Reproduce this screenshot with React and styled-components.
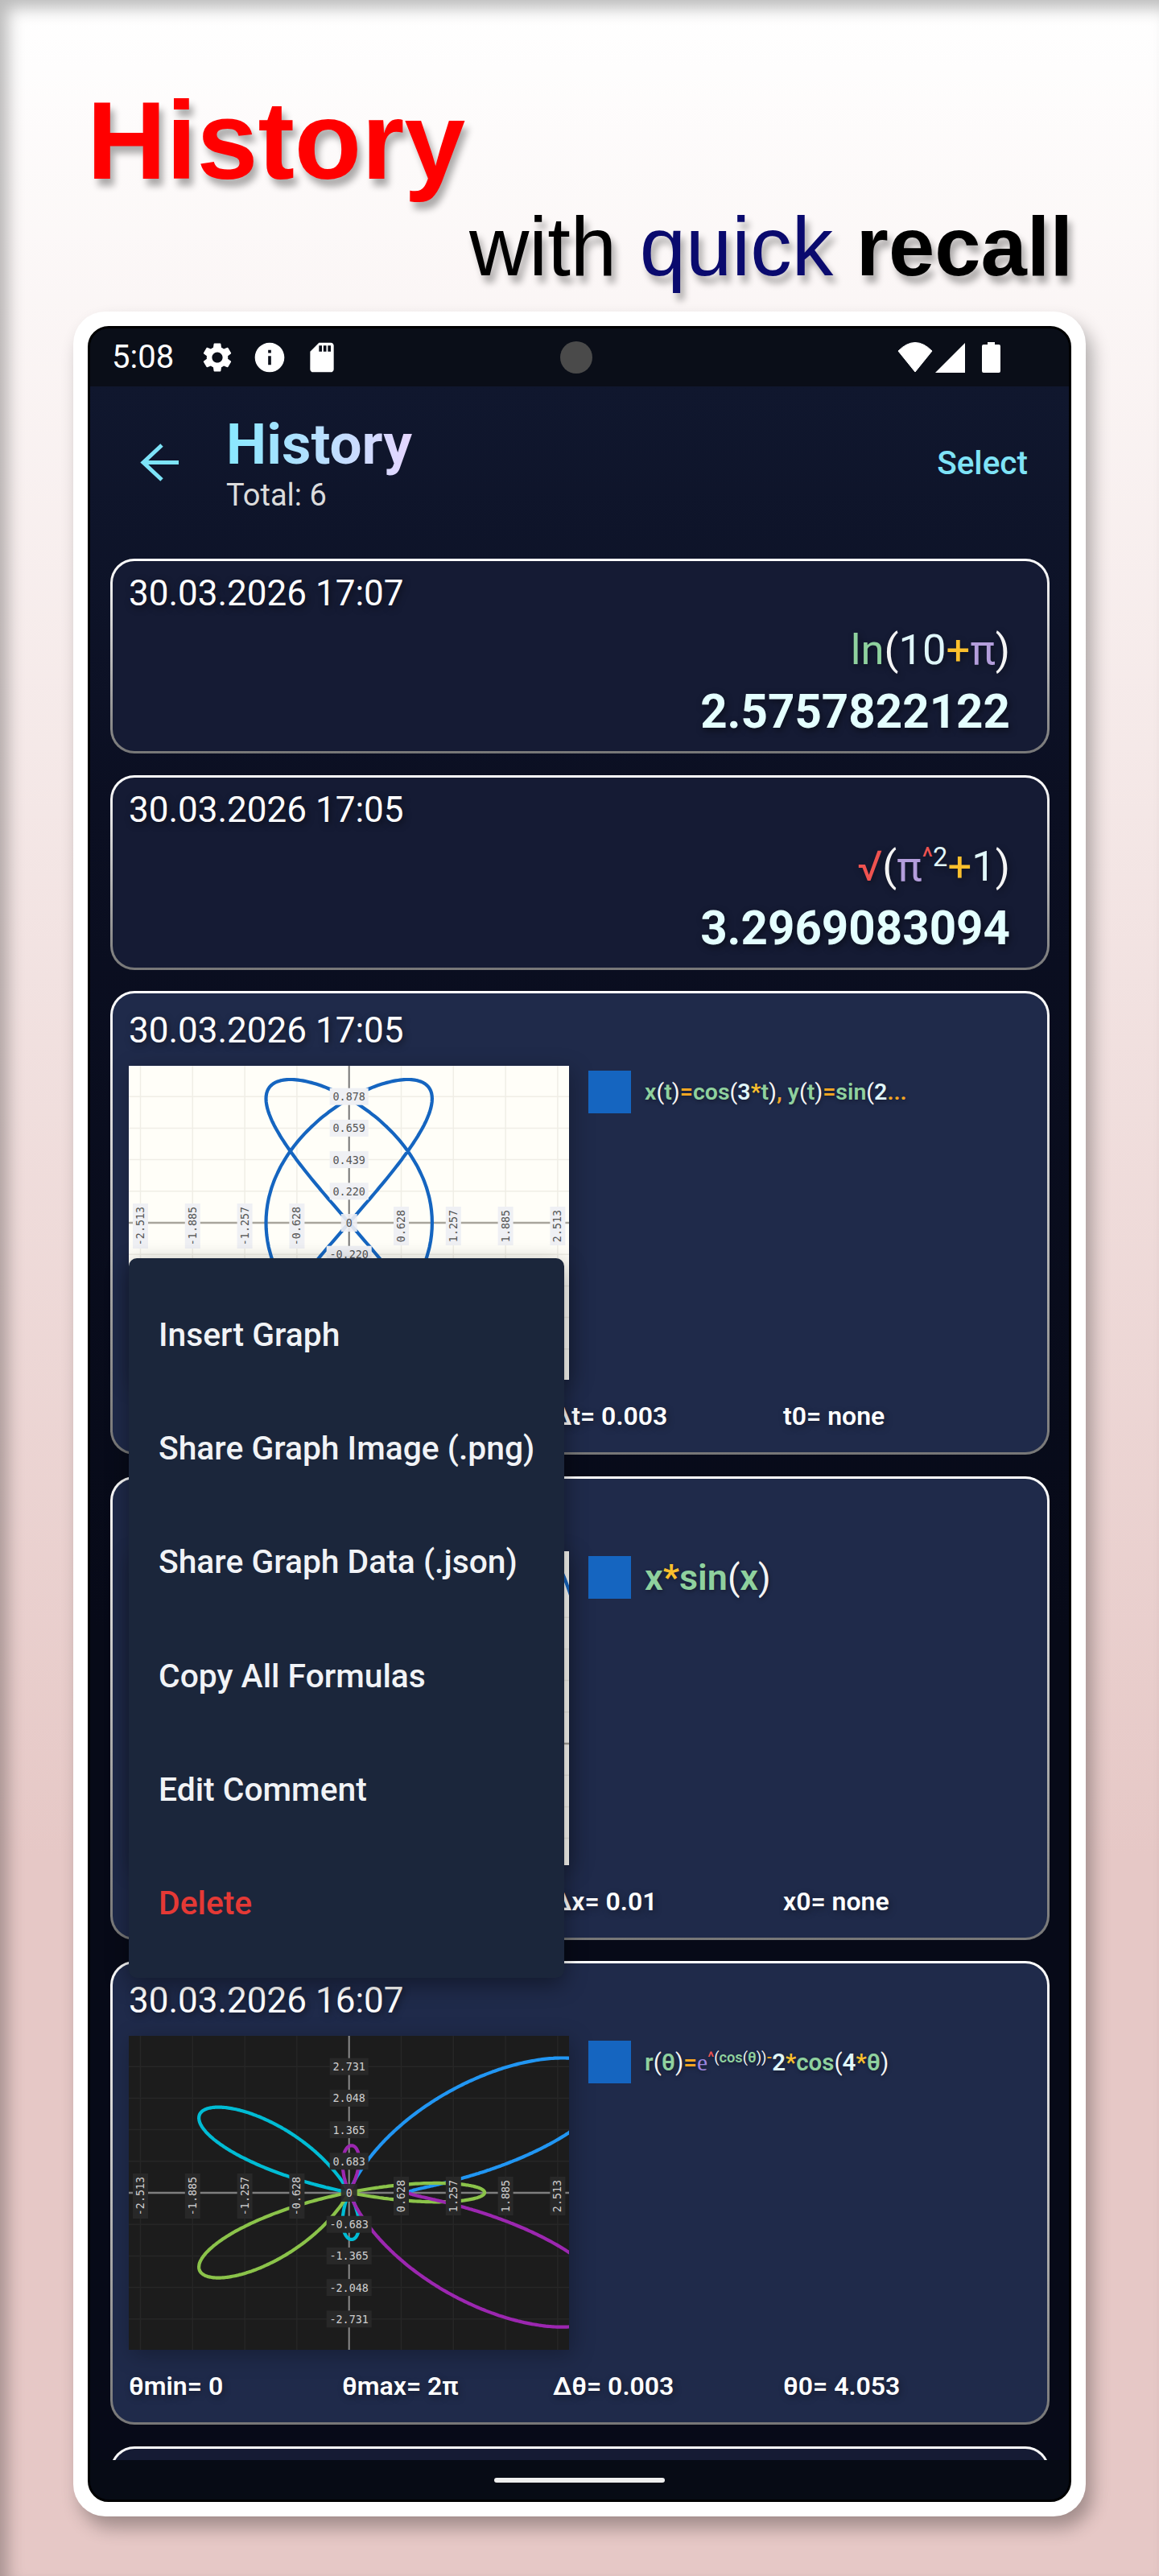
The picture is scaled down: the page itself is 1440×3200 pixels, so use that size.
import React from "react";
import styled, { createGlobalStyle } from "styled-components";
import { MdSettings, MdInfo, MdSdCard } from "react-icons/md";

const GlobalStyle = createGlobalStyle`
  html, body { margin: 0; padding: 0; }
  body { font-family: Roboto, "Liberation Sans", sans-serif; }
`;

const Page = styled.div`
  width: 1440px;
  height: 3200px;
  overflow: hidden;
  box-sizing: border-box;
  padding-top: 105px;
  background: linear-gradient(180deg, #ffffff 0%, #e6c8c6 72%, #e6c8c6 100%);
  position: relative;
  &::after {
    content: "";
    position: absolute;
    inset: 0;
    pointer-events: none;
    box-shadow: inset 12px 12px 20px -2px rgba(0, 0, 0, 0.27);
  }
`;

const Headline = styled.h1`
  margin: 0;
  padding-left: 108px;
  font: 700 136.5px/140px "Liberation Sans", Arial, sans-serif;
  color: #ff0000;
  text-shadow: 5px 9px 9px rgba(0, 0, 0, 0.32);
`;

const Subline = styled.div`
  margin-top: 9px;
  padding-right: 107px;
  text-align: right;
  font: 400 103px/106px "Liberation Sans", Arial, sans-serif;
  color: #000;
  text-shadow: 5px 9px 9px rgba(0, 0, 0, 0.32);
`;

const Quick = styled.span`
  color: #0a0a6e;
`;

const Strong = styled.span`
  font-weight: 700;
`;

const Phone = styled.div`
  margin: 27px 0 0 91px;
  width: 1258px;
  height: 2739px;
  box-sizing: border-box;
  padding: 18px;
  background: #fff;
  border-radius: 40px;
  box-shadow: 8px 14px 22px rgba(0, 0, 0, 0.3);
`;

const Screen = styled.div`
  position: relative;
  height: 100%;
  box-sizing: border-box;
  border: 3px solid #000;
  border-radius: 26px;
  overflow: hidden;
  display: flex;
  flex-direction: column;
  background: #070a18;
`;

const StatusBar = styled.div`
  position: relative;
  flex: none;
  height: 72px;
  display: flex;
  align-items: center;
  padding: 0 85px 0 27px;
  background: #0a0e18;
  color: #fff;
`;

const Clock = styled.span`
  font-size: 40px;
  line-height: 72px;
  margin-right: 32px;
`;

const NoticeIcons = styled.div`
  display: flex;
  align-items: center;
  gap: 21px;
  svg { display: block; }
`;

const Camera = styled.div`
  position: absolute;
  left: 584px;
  top: 16px;
  width: 40px;
  height: 40px;
  border-radius: 50%;
  background: #4a4a4a;
`;

const SystemIcons = styled.div`
  margin-left: auto;
  display: flex;
  align-items: center;
  svg { display: block; }
`;

const Body = styled.div`
  flex: 1;
  min-height: 0;
  overflow: hidden;
  background: linear-gradient(180deg, #10172e 0%, #0b0f22 20%, #070a18 60%, #070a18 100%);
`;

const Header = styled.div`
  height: 190px;
  display: flex;
  align-items: center;
  padding: 0 51px 0 62px;
`;

const BackIcon = styled.svg`
  width: 50px;
  height: 48px;
  margin-right: 57px;
  flex: none;
`;

const TitleBlock = styled.div`
  display: flex;
  flex-direction: column;
`;

const ScreenTitle = styled.div`
  align-self: flex-start;
  font-size: 71px;
  line-height: 78px;
  font-weight: 700;
  background: linear-gradient(90deg, #88e8ff 0%, #e6d6ff 100%);
  -webkit-background-clip: text;
  background-clip: text;
  color: transparent;
`;

const Total = styled.div`
  margin-top: 2px;
  font-size: 38px;
  line-height: 44px;
  color: #dcdcdc;
`;

const SelectButton = styled.div`
  margin-left: auto;
  font-size: 40.5px;
  font-weight: 500;
  color: #7fe3f7;
`;

const List = styled.div`
  display: flex;
  flex-direction: column;
  gap: 26.5px;
  padding: 24px 24px 0 25px;
`;

const Card = styled.div`
  flex: none;
  box-sizing: border-box;
  border: 3px solid transparent;
  border-radius: 30px;
  background:
    linear-gradient(${(p) => p.$fill}, ${(p) => p.$fill}) padding-box,
    linear-gradient(180deg, #ffffff 0%, #d8d8d8 30%, #777777 100%) border-box;
  padding: ${(p) => (p.$graph ? "20px" : "14px")} 46px 0 20px;
  height: ${(p) => p.$height}px;
`;

const DateLine = styled.div`
  font-size: 44px;
  line-height: 52px;
  height: 52px;
  color: #fff;
  text-shadow: 2px 3px 8px rgba(0, 0, 0, 0.5);
`;

const Expression = styled.div`
  margin-top: 12px;
  text-align: right;
  font-size: 52.5px;
  line-height: 64px;
  white-space: nowrap;
  text-shadow: 2px 3px 8px rgba(0, 0, 0, 0.4);
`;

const Result = styled.div`
  margin-top: 13px;
  text-align: right;
  font-size: 58.3px;
  line-height: 64px;
  font-weight: 700;
  color: #e4ffff;
  text-shadow: 2px 3px 8px rgba(0, 0, 0, 0.5);
`;

const TOKEN_COLORS = {
  fn: "#8fd19e",
  paren: "#f4f4f4",
  num: "#e0f7fa",
  plus: "#fbc02d",
  op: "#f5a623",
  mul: "#fbc02d",
  konst: "#b39ddb",
  root: "#ef5350",
};

const Tok = styled.span`
  color: ${(p) => TOKEN_COLORS[p.$k]};
  font-weight: ${(p) => (p.$k === "paren" ? 400 : "inherit")};
`;

const Euler = styled.span`
  color: #9d86e0;
  font-family: "Liberation Serif", serif;
  font-weight: 400;
`;

const Sup = styled.sup`
  font-size: 0.62em;
  line-height: 0;
  vertical-align: ${(p) => p.$raise || "0.55em"};
`;

const GraphRow = styled.div`
  margin-top: 18px;
  display: flex;
  gap: 24px;
  align-items: flex-start;
`;

const PlotFrame = styled.div`
  flex: none;
  width: 547px;
  height: 390px;
  box-shadow: 4px 6px 26px rgba(0, 0, 0, 0.28);
  svg { display: block; }
`;

const Legend = styled.div`
  margin-top: 6px;
  display: flex;
  align-items: center;
  gap: 17px;
  min-width: 0;
`;

const Swatch = styled.div`
  flex: none;
  width: 53px;
  height: 53px;
  background: #1565c0;
`;

const Formula = styled.div`
  font-size: ${(p) => p.$size}px;
  font-weight: 600;
  white-space: nowrap;
  text-shadow: 1px 2px 5px rgba(0, 0, 0, 0.35);
`;

const Params = styled.div`
  margin-top: 25px;
  display: grid;
  grid-template-columns: 265px 262px 286px 1fr;
  font-size: 32px;
  line-height: 40px;
  font-weight: 600;
  color: #fff;
  text-shadow: 2px 3px 8px rgba(0, 0, 0, 0.35);
`;

const NavBar = styled.div`
  flex: none;
  height: 49px;
  display: flex;
  justify-content: center;
  align-items: center;
  background: #070b15;
`;

const HomePill = styled.div`
  width: 212px;
  height: 6px;
  border-radius: 3px;
  background: #eeeeee;
`;

const ContextMenu = styled.div`
  position: absolute;
  left: 48px;
  top: 1155px;
  width: 541px;
  height: 894px;
  box-sizing: border-box;
  padding: 24px 0 22px;
  display: flex;
  flex-direction: column;
  background: #1b263b;
  border-radius: 10px;
  box-shadow: 0 8px 28px rgba(0, 0, 0, 0.4);
`;

const MenuItem = styled.div`
  flex: 1;
  display: flex;
  align-items: center;
  padding-left: 37px;
  font-size: 40.8px;
  font-weight: 500;
  white-space: nowrap;
  color: ${(p) => (p.$danger ? "#e53935" : "#f1f3f6")};
`;

const LIGHT = { bg: "#fffef8", grid: "#f0eee6", hAxis: "#a8a59c", vAxis: "#777777", chip: "#eff0f4", text: "#555555" };
const DARK = { bg: "#1c1c1c", grid: "#262626", hAxis: "#7f7f7f", vAxis: "#8a8a8a", chip: "#282828", text: "#cfcfcf" };

const X_TICKS = ["-2.513", "-1.885", "-1.257", "-0.628", null, "0.628", "1.257", "1.885", "2.513"];

// labels run from the top tick to the bottom tick, null is the origin
const Plot = ({ palette, cy = 195, yTicks = [], xTicks = [], curves }) => {
  const cx = 273.7;
  const stepX = 64.8;
  const stepY = 39.2;
  const gridX = [-4, -3, -2, -1, 0, 1, 2, 3, 4].map((n) => cx + n * stepX);
  const gridY = [-4, -3, -2, -1, 0, 1, 2, 3, 4].map((n) => cy + n * stepY);
  return (
    <svg width="547" height="390" viewBox="0 0 547 390">
      <rect width="547" height="390" fill={palette.bg} />
      {gridX.map((x) => <line key={x} x1={x} x2={x} y1="0" y2="390" stroke={palette.grid} strokeWidth="1.5" />)}
      {gridY.map((y) => <line key={y} x1="0" x2="547" y1={y} y2={y} stroke={palette.grid} strokeWidth="1.5" />)}
      <line x1="0" x2="547" y1={cy} y2={cy} stroke={palette.hAxis} strokeWidth="2.5" />
      <line x1={cx} x2={cx} y1="0" y2="390" stroke={palette.vAxis} strokeWidth="2" />
      {curves.map((c, i) => (
        <path key={i} d={c.d} fill="none" stroke={c.color} strokeWidth="4.2" strokeLinejoin="round" />
      ))}
      {yTicks.map((label, i) => {
        if (label === null) return null;
        const y = cy + (i - yTicks.indexOf(null)) * stepY;
        const w = label.length * 8 + 8;
        return (
          <g key={label}>
            <rect x={cx - w / 2} y={y - 10.5} width={w} height="21" fill={palette.chip} />
            <text x={cx} y={y + 5} textAnchor="middle" fontFamily="DejaVu Sans Mono, monospace" fontSize="13.4" fill={palette.text}>{label}</text>
          </g>
        );
      })}
      {xTicks.map((label, i) => {
        if (label === null) return null;
        const x = cx + (i - 4) * stepX;
        const w = label.length * 8 + 8;
        return (
          <g key={label} transform={`translate(${x} ${cy + 4}) rotate(-90)`}>
            <rect x={-w / 2} y="-9.5" width={w} height="19" fill={palette.chip} />
            <text x="0" y="4.5" textAnchor="middle" fontFamily="DejaVu Sans Mono, monospace" fontSize="13.4" fill={palette.text}>{label}</text>
          </g>
        );
      })}
      {yTicks.length > 0 && (
        <g>
          <rect x={cx - 10} y={cy - 11} width="20" height="22" fill={palette.chip} fillOpacity="0.9" />
          <text x={cx} y={cy + 5} textAnchor="middle" fontFamily="DejaVu Sans Mono, monospace" fontSize="13.4" fill={palette.text}>0</text>
        </g>
      )}
    </svg>
  );
};

const toPath = (points) => points.map(([x, y], i) => `${i ? "L" : "M"}${x.toFixed(1)} ${y.toFixed(1)}`).join("");

const lissajous = () => {
  const points = [];
  for (let i = 0; i <= 600; i++) {
    const t = (i / 600) * Math.PI * 2;
    points.push([273.7 + 103.2 * Math.cos(3 * t), 195 - 178 * Math.sin(2 * t)]);
  }
  return [{ color: "#1565c0", d: toPath(points) }];
};

const xSinX = () => {
  const points = [];
  for (let x = -2.7; x <= 2.7; x += 0.02) {
    points.push([273.7 + 103 * x, 239 - 153 * x * Math.sin(x)]);
  }
  return [{ color: "#1565c0", d: toPath(points) }];
};

// butterfly curve, a new colour starts each time r goes negative
const butterfly = () => {
  const colors = ["#2196f3", "#00bcd4", "#8bc34a", "#9c27b0"];
  const groups = [[]];
  let prev = 1;
  for (let i = 0; i <= 1600; i++) {
    const a = (i / 1600) * Math.PI * 2;
    const r = Math.exp(Math.cos(a)) - 2 * Math.cos(4 * a);
    const point = [273.7 + 103.2 * r * Math.cos(a), 194.6 - 57.5 * r * Math.sin(a)];
    if (prev > 0 && r <= 0 && groups.length < 4) {
      groups[groups.length - 1].push(point);
      groups.push([]);
    }
    groups[groups.length - 1].push(point);
    prev = r;
  }
  return groups.map((g, i) => ({ color: colors[i], d: toPath(g) }));
};

const Tokens = ({ list }) => list.map(([text, kind], i) => <Tok key={i} $k={kind}>{text}</Tok>);

const TextEntry = ({ date, children, result }) => (
  <Card $fill="#151b34" $height={242}>
    <DateLine>{date}</DateLine>
    <Expression>{children}</Expression>
    <Result>{result}</Result>
  </Card>
);

const GraphEntry = ({ date, plot, formula, params }) => (
  <Card $graph $fill="#1f2a4a" $height={576}>
    <DateLine>{date}</DateLine>
    <GraphRow>
      <PlotFrame>{plot}</PlotFrame>
      <Legend>
        <Swatch />
        {formula}
      </Legend>
    </GraphRow>
    <Params>{params.map((p, i) => <span key={i}>{p}</span>)}</Params>
  </Card>
);

const MENU = ["Insert Graph", "Share Graph Image (.png)", "Share Graph Data (.json)", "Copy All Formulas", "Edit Comment"];

export default function App() {
  return (
    <>
      <GlobalStyle />
      <Page>
        <Headline>History</Headline>
        <Subline>with <Quick>quick</Quick> <Strong>recall</Strong></Subline>
        <Phone>
          <Screen>
            <StatusBar>
              <Clock>5:08</Clock>
              <NoticeIcons>
                <MdSettings size={44} />
                <MdInfo size={44} />
                <MdSdCard size={44} />
              </NoticeIcons>
              <Camera />
              <SystemIcons>
                <svg width="44" height="38" viewBox="0 0 44 38" fill="#fff" style={{ marginRight: 3 }}>
                  <path d="M1 11 Q22 -10 43 11 L22 37 Z" stroke="#fff" strokeLinejoin="round" />
                </svg>
                <svg width="37" height="38" viewBox="0 0 37 38" fill="#fff" style={{ marginRight: 21 }}>
                  <path d="M37 1 V38 H0 Z" />
                </svg>
                <svg width="23" height="38" viewBox="0 0 23 38" fill="#fff">
                  <path d="M7 0 H16 V3 H21 A2 2 0 0 1 23 5 V36 A2 2 0 0 1 21 38 H2 A2 2 0 0 1 0 36 V5 A2 2 0 0 1 2 3 H7 Z" />
                </svg>
              </SystemIcons>
            </StatusBar>
            <Body>
              <Header>
                <BackIcon viewBox="0 0 50 48" fill="none" stroke="#7de3f8" strokeWidth="5">
                  <path d="M48 23.5 H5" />
                  <path d="M27 2 L4 23.5 L27 45" />
                </BackIcon>
                <TitleBlock>
                  <ScreenTitle>History</ScreenTitle>
                  <Total>Total: 6</Total>
                </TitleBlock>
                <SelectButton>Select</SelectButton>
              </Header>
              <List>
                <TextEntry date="30.03.2026 17:07" result="2.5757822122">
                  <Tokens list={[["ln", "fn"], ["(", "paren"], ["10", "num"], ["+", "plus"], ["π", "konst"], [")", "paren"]]} />
                </TextEntry>
                <TextEntry date="30.03.2026 17:05" result="3.2969083094">
                  <Tok $k="root">√</Tok>
                  <Tok $k="paren">(</Tok>
                  <Tok $k="konst">π</Tok>
                  <Sup><Tok $k="root">^</Tok><Tok $k="num">2</Tok></Sup>
                  <Tok $k="plus">+</Tok>
                  <Tok $k="num">1</Tok>
                  <Tok $k="paren">)</Tok>
                </TextEntry>
                <GraphEntry
                  date="30.03.2026 17:05"
                  plot={<Plot palette={LIGHT} curves={lissajous()} xTicks={X_TICKS} yTicks={["0.878", "0.659", "0.439", "0.220", null, "-0.220"]} />}
                  formula={
                    <Formula $size={28.5}>
                      <Tokens list={[["x", "fn"], ["(", "paren"], ["t", "fn"], [")", "paren"], ["=", "op"], ["cos", "fn"], ["(", "paren"], ["3", "num"], ["*", "mul"], ["t", "fn"], [")", "paren"], [", ", "op"], ["y", "fn"], ["(", "paren"], ["t", "fn"], [")", "paren"], ["=", "op"], ["sin", "fn"], ["(", "paren"], ["2", "num"], ["...", "op"]]} />
                    </Formula>
                  }
                  params={["", "", "Δt= 0.003", "t0= none"]}
                />
                <GraphEntry
                  date=""
                  plot={<Plot palette={LIGHT} cy={239} curves={xSinX()} />}
                  formula={
                    <Formula $size={45}>
                      <Tokens list={[["x", "fn"], ["*", "mul"], ["sin", "fn"], ["(", "paren"], ["x", "fn"], [")", "paren"]]} />
                    </Formula>
                  }
                  params={["", "", "Δx= 0.01", "x0= none"]}
                />
                <GraphEntry
                  date="30.03.2026 16:07"
                  plot={<Plot palette={DARK} curves={butterfly()} xTicks={X_TICKS} yTicks={["2.731", "2.048", "1.365", "0.683", null, "-0.683", "-1.365", "-2.048", "-2.731"]} />}
                  formula={
                    <Formula $size={29.5}>
                      <Tokens list={[["r", "fn"], ["(", "paren"], ["θ", "fn"], [")", "paren"], ["=", "op"]]} />
                      <Euler>e</Euler>
                      <Sup>
                        <Tok $k="root">^</Tok>
                        <Tokens list={[["(", "paren"], ["cos", "fn"], ["(", "paren"], ["θ", "fn"], [")", "paren"], [")", "paren"], ["-", "op"]]} />
                      </Sup>
                      <Tokens list={[["2", "num"], ["*", "mul"], ["cos", "fn"], ["(", "paren"], ["4", "num"], ["*", "mul"], ["θ", "fn"], [")", "paren"]]} />
                    </Formula>
                  }
                  params={["θmin= 0", "θmax= 2π", "Δθ= 0.003", "θ0= 4.053"]}
                />
                <Card $fill="#151b34" $height={242} />
              </List>
            </Body>
            <NavBar><HomePill /></NavBar>
            <ContextMenu>
              {MENU.map((item) => <MenuItem key={item}>{item}</MenuItem>)}
              <MenuItem $danger>Delete</MenuItem>
            </ContextMenu>
          </Screen>
        </Phone>
      </Page>
    </>
  );
}
